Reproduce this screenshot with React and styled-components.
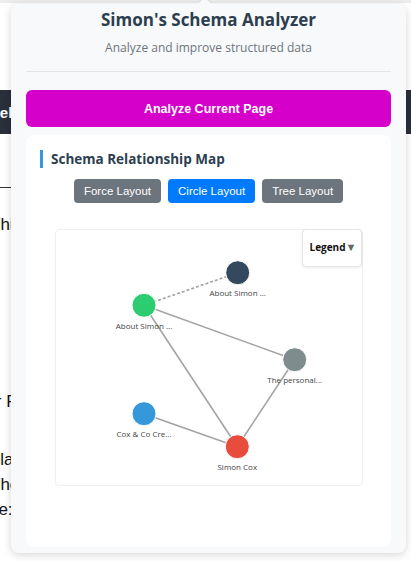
import styled, { createGlobalStyle } from 'styled-components';

const GlobalStyle = createGlobalStyle`
    html, body {
        margin: 0;
        padding: 0;
        background: #ffffff;
        overflow: hidden;
    }
    body {
        font-family: "Liberation Sans", Arial, sans-serif;
    }
`;

const Page = styled.div`
    position: relative;
    width: 411px;
    height: 561px;
    overflow: hidden;
    background: #ffffff;
`;

const TopStrip = styled.div`
    height: 3px;
    background: #ececec;
`;

const NavBar = styled.div`
    margin-top: 87px;
    height: 44px;
    background: #2b2f3a;
    display: flex;
    align-items: center;
`;

const NavText = styled.span`
    margin-left: -31px;
    color: #ffffff;
    font-weight: bold;
    font-size: 15px;
`;

const PageBody = styled.div`
    padding-top: 53px;
`;

const Rule = styled.div`
    height: 1px;
    width: 40px;
    background: #333;
`;

const BodyText = styled.p`
    margin: ${p => p.$top || 0}px 0 0 ${p => p.$shift || 0}px;
    font-size: 17px;
    line-height: 25px;
    color: #111;
    white-space: nowrap;
`;

const Popup = styled.div`
    position: absolute;
    top: 4px;
    left: 11px;
    width: 395px;
    height: 549px;
    box-sizing: border-box;
    padding: 5px 15px 6px;
    background: #f8f9fa;
    border-radius: 8px;
    box-shadow: 0 2px 8px rgba(0, 0, 0, 0.16);
    display: flex;
    flex-direction: column;
    font-family: "Open Sans", "Noto Sans", sans-serif;

    &::before {
        content: '';
        position: absolute;
        top: -5px;
        left: 189px;
        width: 9px;
        height: 9px;
        background: #f8f9fa;
        transform: rotate(45deg);
        box-shadow: -1px -1px 1px rgba(0, 0, 0, 0.06);
    }
`;

const Header = styled.header`
    text-align: center;
    padding-bottom: 15px;
    border-bottom: 1px solid #e2e4e7;
    position: relative;
`;

const Title = styled.h1`
    margin: 0;
    font-size: 17px;
    line-height: 22px;
    font-weight: 700;
    color: #2c3e50;
`;

const Subtitle = styled.p`
    margin: 9px 0 0;
    font-size: 12px;
    line-height: 16px;
    color: #6c757d;
`;

const AnalyzeButton = styled.button`
    margin-top: 18px;
    height: 37px;
    border: none;
    border-radius: 6px;
    background: #d500c9;
    color: #ffffff;
    font-family: "Liberation Sans", Arial, sans-serif;
    font-weight: bold;
    font-size: 12.5px;
    cursor: pointer;
`;

const Card = styled.section`
    margin-top: 8px;
    flex: 1;
    background: #ffffff;
    border-radius: 8px;
    padding: 15px 14px 0;
    display: flex;
    flex-direction: column;
`;

const SectionTitle = styled.h2`
    margin: 0;
    padding-left: 8px;
    border-left: 3px solid #3498db;
    font-size: 13.5px;
    line-height: 18px;
    font-weight: 700;
    color: #2c3e50;
`;

const LayoutRow = styled.div`
    margin-top: 11px;
    display: flex;
    justify-content: center;
    gap: 7px;
`;

const LayoutButton = styled.button`
    height: 24px;
    padding: 0 10px;
    border: none;
    border-radius: 4px;
    background: ${p => (p.$active ? '#007bff' : '#6c757d')};
    color: #ffffff;
    font-family: "Liberation Sans", Arial, sans-serif;
    font-size: 11.5px;
`;

const GraphBox = styled.div`
    position: relative;
    margin: 26px auto 0;
    width: 308px;
    height: 257px;
    box-sizing: border-box;
    border: 1px solid #eceef0;
    border-radius: 4px;
    background: #ffffff;
`;

const Legend = styled.div`
    position: absolute;
    top: -1px;
    right: 0;
    width: 60px;
    height: 38px;
    box-sizing: border-box;
    padding-top: 9px;
    padding-left: 7px;
    background: #ffffff;
    border: 1px solid #e4e6e8;
    border-radius: 4px;
    box-shadow: 0 1px 3px rgba(0, 0, 0, 0.08);
    font-size: 10px;
    font-weight: 700;
    color: #111;
`;

const Caret = styled.span`
    color: #666;
    font-size: 11px;
`;

const NodeLabel = styled.text`
    font-family: "Open Sans", "Noto Sans", sans-serif;
    font-size: 8px;
    fill: #444;
    text-anchor: middle;
`;

const nodes = [
    { id: 'navy', x: 180.7, y: 41.7, color: '#34495e', label: 'About Simon ...' },
    { id: 'green', x: 87, y: 74.3, color: '#2ecc71', label: 'About Simon ...' },
    { id: 'gray', x: 237.7, y: 128.7, color: '#7f8c8d', label: 'The personal...' },
    { id: 'blue', x: 87, y: 182.7, color: '#3498db', label: 'Cox & Co Cre...' },
    { id: 'red', x: 180.3, y: 215.7, color: '#e74c3c', label: 'Simon Cox' },
];

const links = [
    { from: 'green', to: 'navy', dashed: true },
    { from: 'green', to: 'gray' },
    { from: 'green', to: 'red' },
    { from: 'gray', to: 'red' },
    { from: 'blue', to: 'red' },
];

function SchemaGraph() {
    const byId = Object.fromEntries(nodes.map(n => [n.id, n]));
    return (
        <svg width="306" height="255" viewBox="-1 -1 306 255">
            {links.map(l => (
                <line
                    key={l.from + l.to}
                    x1={byId[l.from].x}
                    y1={byId[l.from].y}
                    x2={byId[l.to].x}
                    y2={byId[l.to].y}
                    stroke="#999"
                    strokeWidth="1.6"
                    strokeOpacity="0.9"
                    strokeDasharray={l.dashed ? '3 2' : undefined}
                />
            ))}
            {nodes.map(n => (
                <g key={n.id}>
                    <circle cx={n.x} cy={n.y} r="12" fill={n.color} stroke="#fff" strokeWidth="1" />
                    <NodeLabel x={n.x} y={n.y + 23.5}>{n.label}</NodeLabel>
                </g>
            ))}
        </svg>
    );
}

export default function App() {
    return (
        <Page>
            <GlobalStyle />
            <TopStrip />
            <NavBar>
                <NavText>Models</NavText>
            </NavBar>
            <PageBody>
                <Rule />
                <BodyText $top={24} $shift={-10}>This</BodyText>
                <BodyText $shift={-30}>Sig</BodyText>
                <BodyText $top={127} $shift={-24}>For Fun</BodyText>
                <BodyText $top={33} $shift={-11}>Plan</BodyText>
                <BodyText $shift={-10}>The</BodyText>
                <BodyText $shift={-29}>Type:</BodyText>
            </PageBody>

            <Popup>
                <Header>
                    <Title>Simon's Schema Analyzer</Title>
                    <Subtitle>Analyze and improve structured data</Subtitle>
                </Header>
                <AnalyzeButton>Analyze Current Page</AnalyzeButton>
                <Card>
                    <SectionTitle>Schema Relationship Map</SectionTitle>
                    <LayoutRow>
                        <LayoutButton>Force Layout</LayoutButton>
                        <LayoutButton $active>Circle Layout</LayoutButton>
                        <LayoutButton>Tree Layout</LayoutButton>
                    </LayoutRow>
                    <GraphBox>
                        <SchemaGraph />
                        <Legend>
                            Legend<Caret>▼</Caret>
                        </Legend>
                    </GraphBox>
                </Card>
            </Popup>
        </Page>
    );
}
